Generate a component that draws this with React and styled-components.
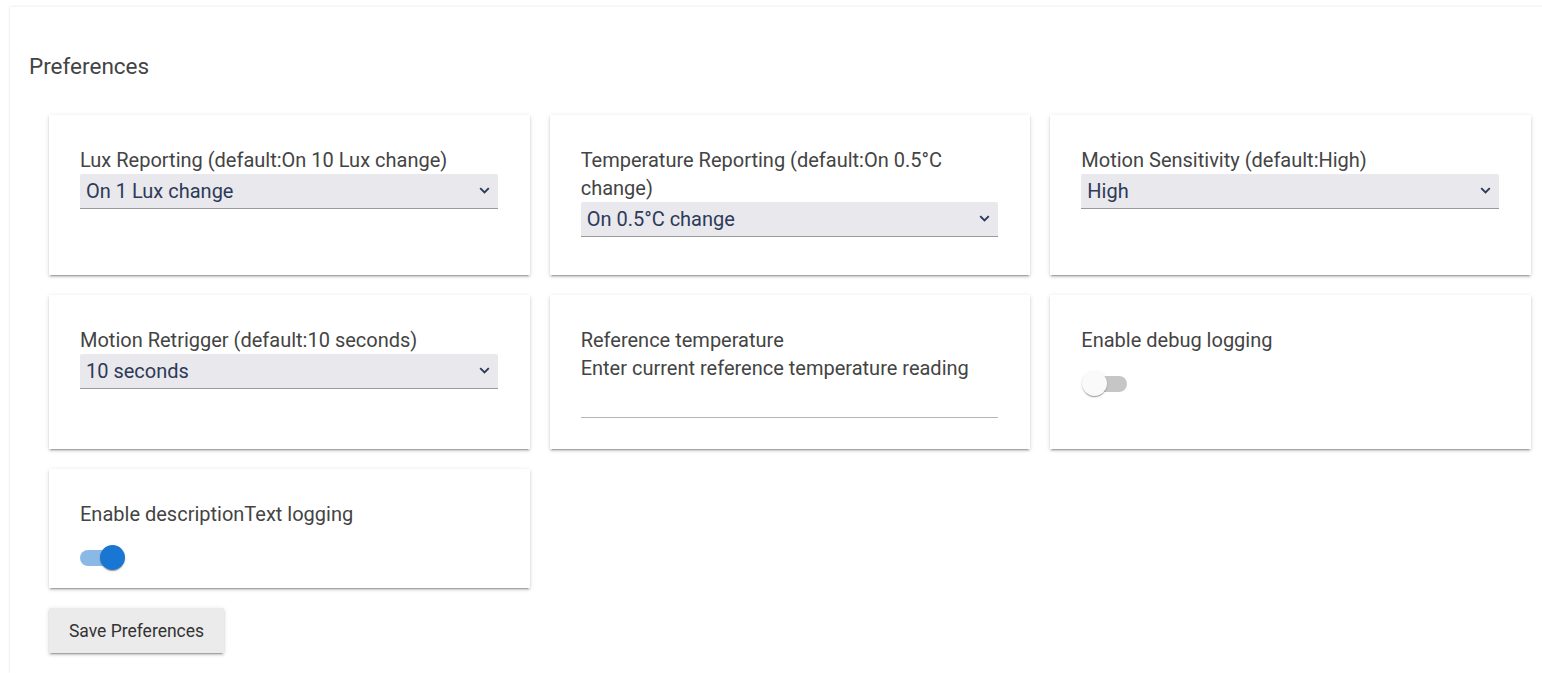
import React, { useState } from 'react'
import styled, { createGlobalStyle } from 'styled-components'

const GlobalStyle = createGlobalStyle`
body{
  margin:0;
  background:#fff;
  font-family: Roboto, "Noto Sans", sans-serif;
  overflow:hidden;
}
`
const Page = styled.div`
padding: 7px 0 0 10px;
`
const Panel = styled.div`
width: 1560px;
height: 666px;
background:#fff;
box-shadow: 0 0 3px rgba(0,0,0,0.12);
padding: 45px 0 0 19px;
box-sizing:border-box;
`
const Title = styled.h2`
margin:0;
font-size:22.5px;
font-weight:400;
line-height:28px;
color:#444;
`
const Body = styled.div`
padding: 35px 0 0 20px;
width: 1482px;
`
const Grid = styled.div`
display:grid;
grid-template-columns: repeat(3, 1fr);
gap:20px;
`
const Card = styled.div`
background:#fff;
padding: 31px 32px 12px 31px;
box-shadow: 0 3px 1px -2px rgba(0,0,0,.2), 0 2px 2px 0 rgba(0,0,0,.14), 0 1px 5px 0 rgba(0,0,0,.12);
display:flex;
flex-direction:column;
`
const Label = styled.div`
font-size:20px;
line-height:28px;
color:#444;
`
const SelectBox = styled.div`
position:relative;
height:35px;
background:#e8e8ed;
border-bottom:1px solid #9a9a9a;
border-radius:2px 2px 0 0;
box-sizing:border-box;
margin-bottom:${p => p.$mb || 26}px;
display:flex;
align-items:center;
padding:0 30px 0 6px;
font-size:20px;
color:#2d3a58;
`
const Chevron = styled.svg`
position:absolute;
right:8px;
top:13px;
`
const TextInput = styled.div`
height:35px;
border-bottom:1px solid #b5b5b5;
margin-bottom:19px;
`
const SwitchWrap = styled.div`
position:relative;
width:46px;
height:36px;
margin-top:12px;
`
const Track = styled.div`
position:absolute;
left:${p => (p.$on ? 0 : 8)}px;
top:10px;
width:38px;
height:16px;
border-radius:8px;
background:${p => (p.$on ? '#8bb9e5' : '#c6c6c6')};
`
const Thumb = styled.div`
position:absolute;
top:5px;
left:${p => (p.$on ? 20 : 1)}px;
width:25px;
height:25px;
border-radius:50%;
background:${p => (p.$on ? '#1976d2' : '#fafafa')};
box-shadow: 0 2px 1px -1px rgba(0,0,0,.2), 0 1px 1px 0 rgba(0,0,0,.14), 0 1px 3px 0 rgba(0,0,0,.12);
`
const SaveButton = styled.button`
margin-top:20px;
width:175px;
height:45px;
border:none;
background:#ebebeb;
color:#333;
font-family: Roboto, sans-serif;
font-size:17.5px;
box-shadow: 0 3px 1px -2px rgba(0,0,0,.2), 0 2px 2px 0 rgba(0,0,0,.14), 0 1px 5px 0 rgba(0,0,0,.12);
cursor:pointer;
`

const Select = ({ value, mb }) => (
  <SelectBox $mb={mb}>
    {value}
    <Chevron width="11" height="7" viewBox="0 0 11 7">
      <path d="M1.2 1.2 L5.5 5.5 L9.8 1.2" fill="none" stroke="#2d3a58" strokeWidth="1.9" />
    </Chevron>
  </SelectBox>
)

const Switch = ({ on, onClick }) => (
  <SwitchWrap onClick={onClick}>
    <Track $on={on} />
    <Thumb $on={on} />
  </SwitchWrap>
)

export default function App() {
  const [debug, setDebug] = useState(false)
  const [desc, setDesc] = useState(true)
  return (
    <Page>
      <GlobalStyle />
      <Panel>
        <Title>Preferences</Title>
        <Body>
          <Grid>
            <Card>
              <Label>Lux Reporting (default:On 10 Lux change)</Label>
              <Select value="On 1 Lux change" />
            </Card>
            <Card>
              <Label>Temperature Reporting (default:On 0.5°C change)</Label>
              <Select value="On 0.5°C change" />
            </Card>
            <Card>
              <Label>Motion Sensitivity (default:High)</Label>
              <Select value="High" />
            </Card>
            <Card>
              <Label>Motion Retrigger (default:10 seconds)</Label>
              <Select value="10 seconds" />
            </Card>
            <Card>
              <Label>Reference temperature</Label>
              <Label>Enter current reference temperature reading</Label>
              <TextInput />
            </Card>
            <Card>
              <Label>Enable debug logging</Label>
              <Switch on={debug} onClick={() => setDebug(!debug)} />
            </Card>
            <Card>
              <Label>Enable descriptionText logging</Label>
              <Switch on={desc} onClick={() => setDesc(!desc)} />
            </Card>
          </Grid>
          <SaveButton>Save Preferences</SaveButton>
        </Body>
      </Panel>
    </Page>
  )
}
